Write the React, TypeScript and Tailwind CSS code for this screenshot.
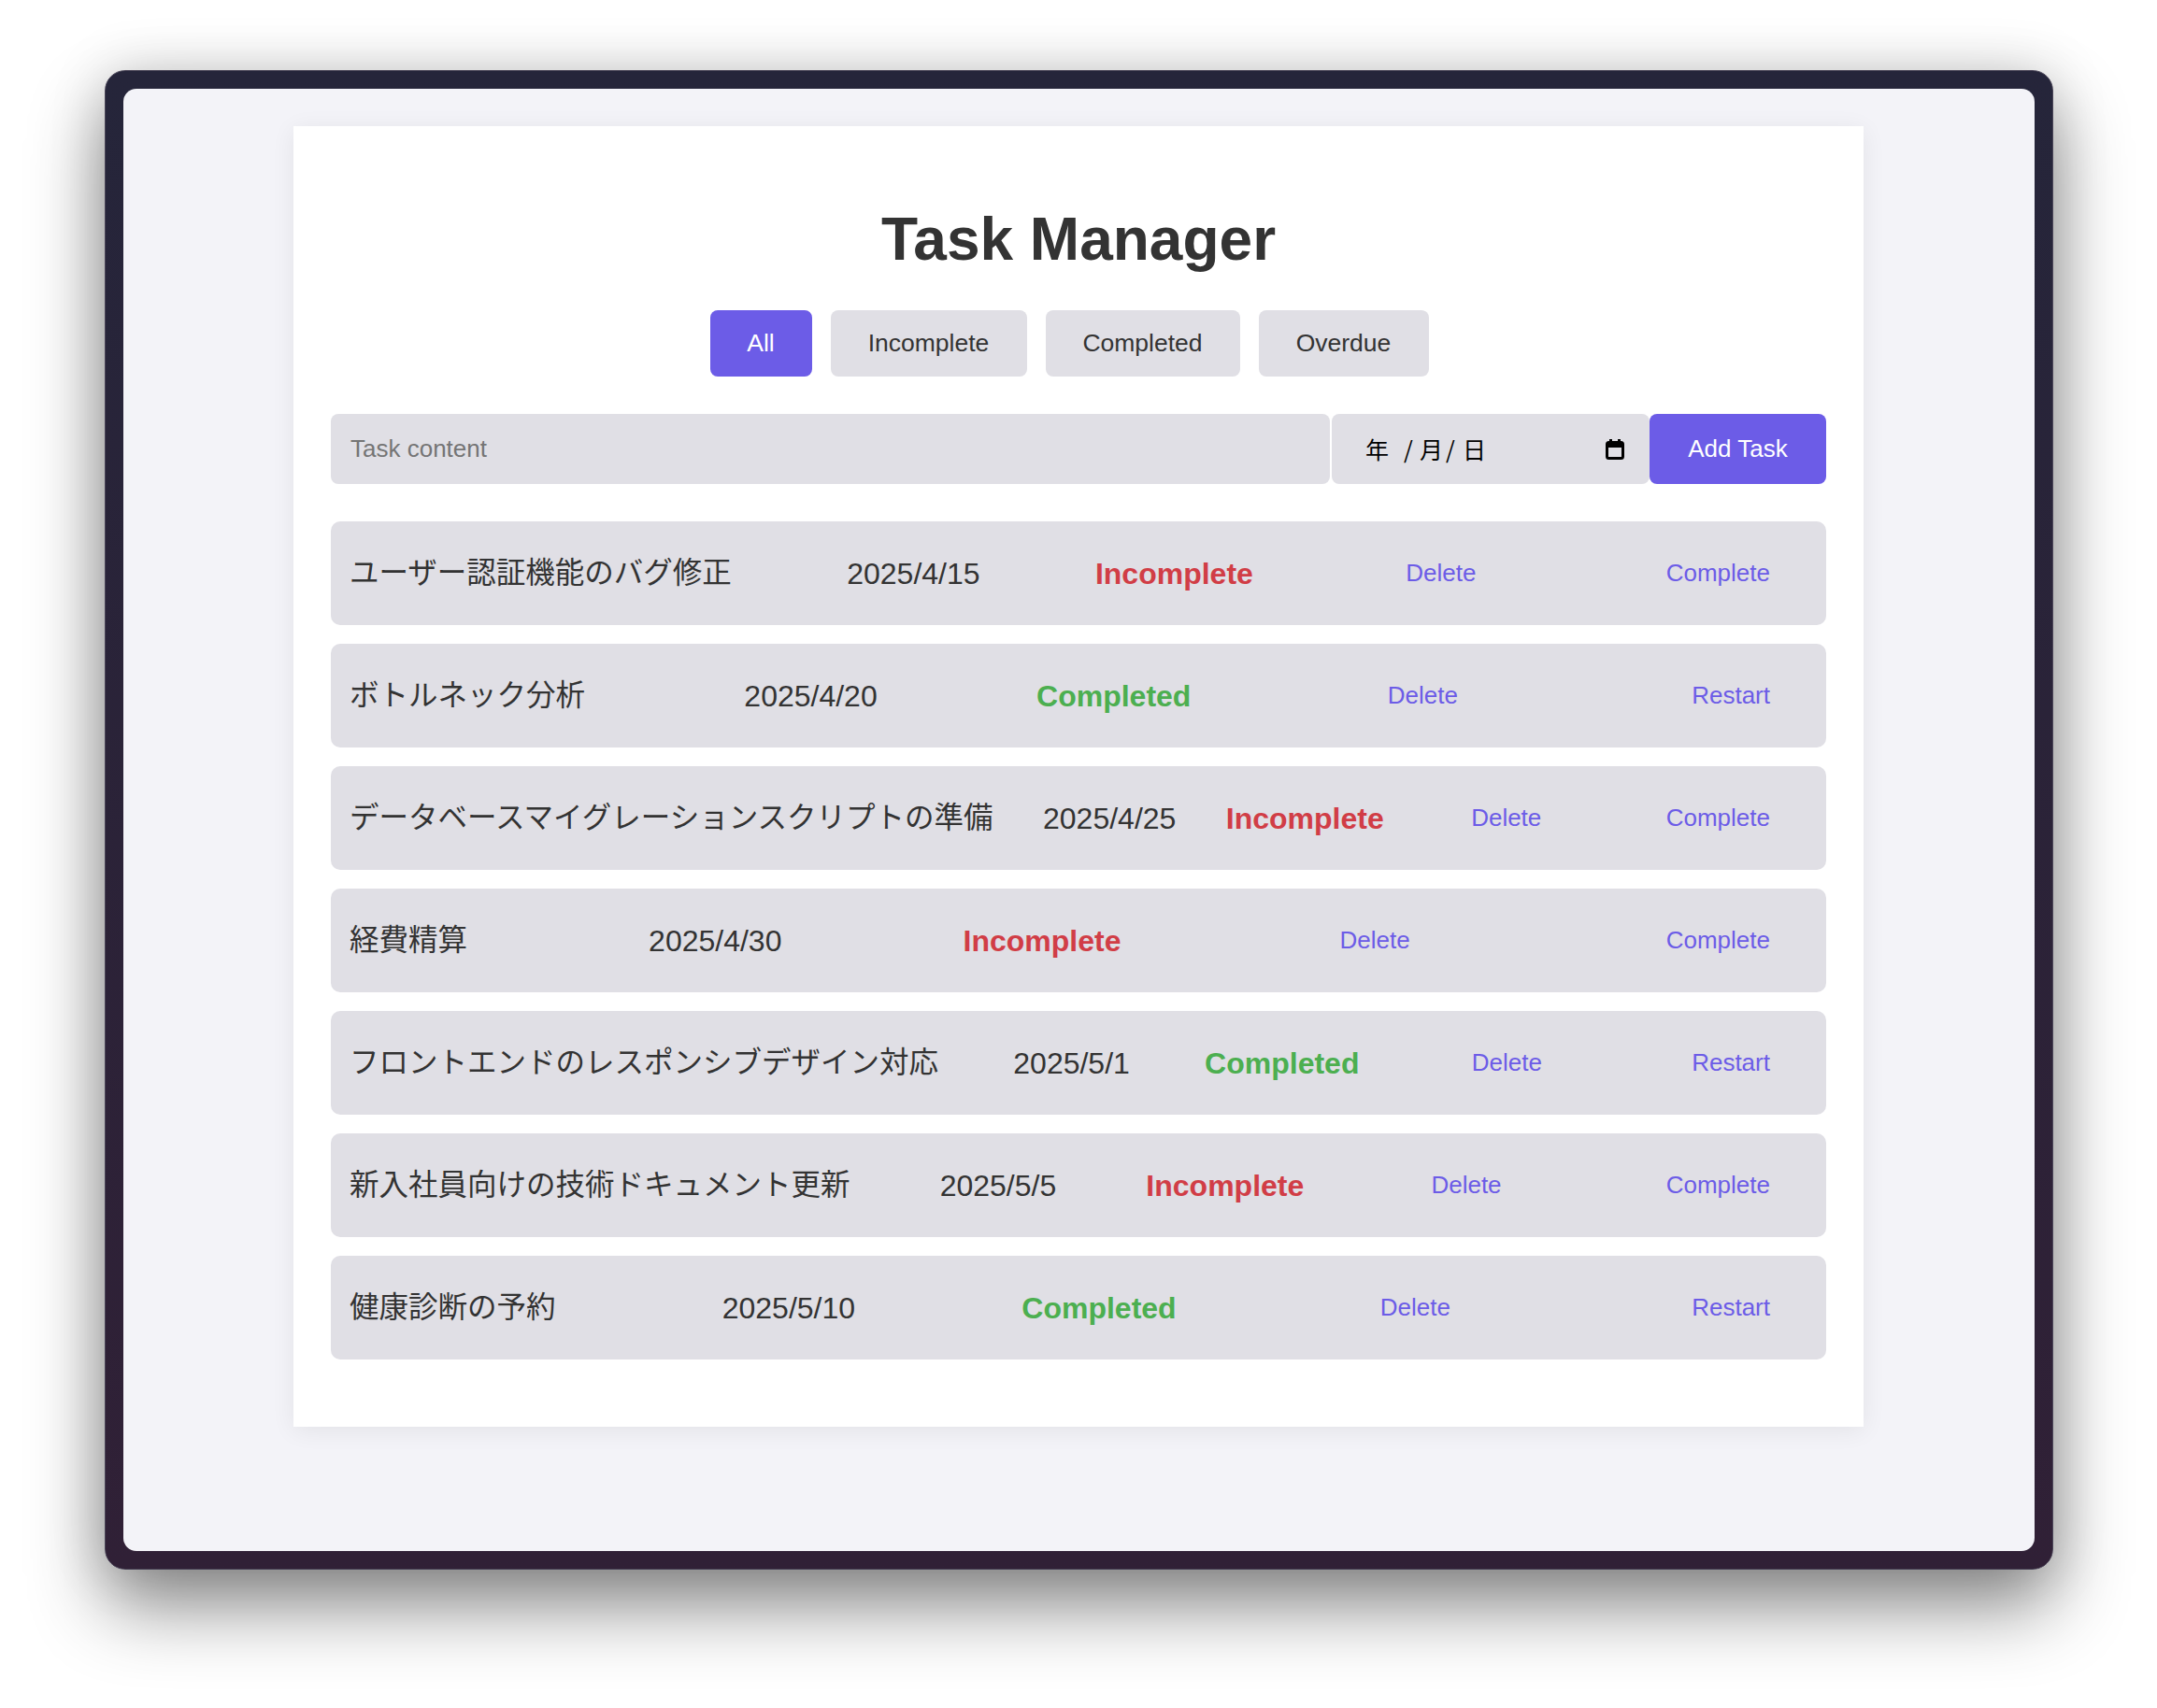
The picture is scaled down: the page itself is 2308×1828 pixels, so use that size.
import React from "react";

const TASKS = [
  { name: "ユーザー認証機能のバグ修正", date: "2025/4/15", done: false },
  { name: "ボトルネック分析", date: "2025/4/20", done: true },
  { name: "データベースマイグレーションスクリプトの準備", date: "2025/4/25", done: false },
  { name: "経費精算", date: "2025/4/30", done: false },
  { name: "フロントエンドのレスポンシブデザイン対応", date: "2025/5/1", done: true },
  { name: "新入社員向けの技術ドキュメント更新", date: "2025/5/5", done: false },
  { name: "健康診断の予約", date: "2025/5/10", done: true },
];

const FILTERS = [
  { label: "All", w: "w-[109px]" },
  { label: "Incomplete", w: "w-[210px]" },
  { label: "Completed", w: "w-[208px]" },
  { label: "Overdue", w: "w-[182px]" },
];

function CalendarIcon() {
  return (
    <svg width="20" height="23" viewBox="0 0 20 23" fill="black">
      <rect x="1.5" y="4.5" width="17" height="17" rx="2" fill="none" stroke="black" strokeWidth="3" />
      <rect x="1" y="4" width="18" height="6" rx="1.5" />
      <rect x="4" y="1" width="3" height="5" />
      <rect x="13" y="1" width="3" height="5" />
    </svg>
  );
}

export default function App() {
  return (
    <div className="min-h-screen bg-white pt-[75px] font-['Liberation_Sans','Noto_Sans_CJK_JP',sans-serif]">
      <div className="mx-auto h-[1605px] w-[2085px] rounded-[22px] border border-[#4b4658] bg-gradient-to-b from-[#25253a] to-[#302036] p-[19px] shadow-[0_40px_80px_rgba(0,0,0,0.45),0_0_60px_rgba(0,0,0,0.15)]">
        <div className="h-full rounded-[14px] bg-[#f3f3f8] pt-[40px]">
          <div className="mx-auto w-[1680px] bg-white px-[40px] pt-[40px] pb-[72px] shadow-[0_4px_24px_rgba(0,0,0,0.07)]">
            <h1 className="mt-[49px] text-center text-[64px] font-bold leading-none text-[#333]">Task Manager</h1>

            {/* filters */}
            <div className="mt-[44px] flex justify-center">
              {FILTERS.map((f, i) => (
                <button key={f.label}
                  className={`mr-[20px] flex h-[71px] items-center justify-center rounded-[8px] text-[26.5px] ${f.w} ${i === 0 ? "bg-[#6c5ce7] text-white" : "bg-[#e0dfe5] text-[#333]"}`}>
                  {f.label}
                </button>
              ))}
            </div>

            {/* add form */}
            <div className="mt-[40px] flex h-[75px]">
              <div className="flex flex-1 items-center rounded-[8px] bg-[#e0dfe5] px-[21px] text-[26px] text-[#757575]">Task content</div>
              <div className="ml-[2px] flex w-[340px] items-center justify-between rounded-[8px] bg-[#e0dfe5] pl-[36px] pr-[27px] text-[25px] text-black font-['Noto_Sans_CJK_JP',sans-serif]">
                <div className="flex items-center">
                  <span className="w-[41px]">年</span>
                  <span className="w-[17px]">/</span>
                  <span className="w-[28px]">月</span>
                  <span className="w-[18px]">/</span>
                  <span>日</span>
                </div>
                <CalendarIcon />
              </div>
              <button className="w-[189px] rounded-[8px] bg-[#6c5ce7] text-[26px] text-white">Add Task</button>
            </div>

            {/* task list */}
            <div className="mt-[40px] flex flex-col gap-[20px]">
              {TASKS.map((t) => (
                <div key={t.name} className="flex h-[111px] items-center justify-between rounded-[10px] bg-[#e0dfe5] px-[20px] text-[32px] text-[#333]">
                  <span className="text-[31.5px]">{t.name}</span>
                  <span>{t.date}</span>
                  <span className={`font-bold ${t.done ? "text-[#4caf50]" : "text-[#d13d46]"}`}>{t.done ? "Completed" : "Incomplete"}</span>
                  <button className="px-[40px] text-[26px] text-[#6c5ce7]">Delete</button>
                  <button className="px-[40px] text-[26px] text-[#6c5ce7]">{t.done ? "Restart" : "Complete"}</button>
                </div>
              ))}
            </div>
          </div>
        </div>
      </div>
    </div>
  );
}
